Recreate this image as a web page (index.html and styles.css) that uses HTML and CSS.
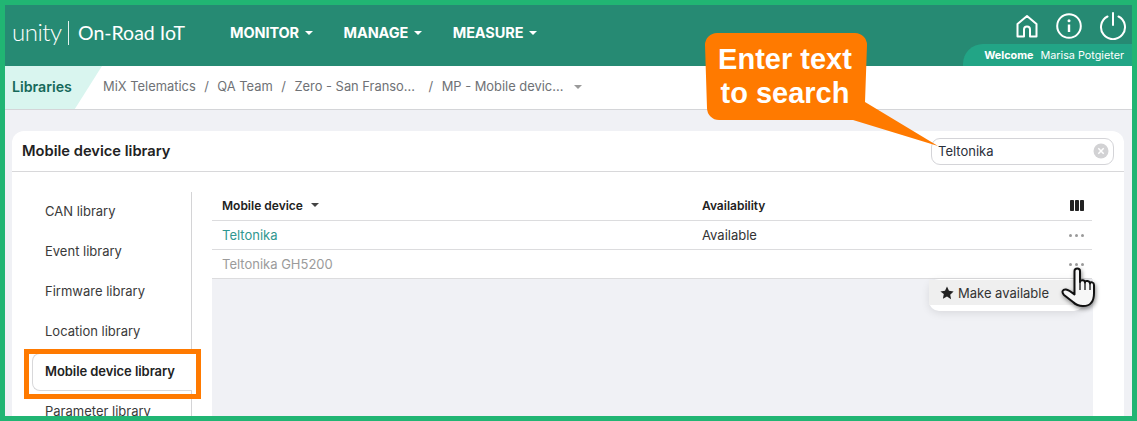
FILE: index.html
```html
<!DOCTYPE html>
<html lang="en">
<head>
<meta charset="utf-8">
<title>Mobile device library</title>
<link rel="stylesheet" href="styles.css">
</head>
<body>
<div class="frame">
  <header class="topbar">
    <div class="brand">
      <span class="brand-word">unity</span>
      <span class="brand-sep"></span>
      <span class="brand-app">On-Road IoT</span>
    </div>
    <nav class="mainnav">
      <span class="navitem">MONITOR<i class="caret caret-w"></i></span>
      <span class="navitem">MANAGE<i class="caret caret-w"></i></span>
      <span class="navitem">MEASURE<i class="caret caret-w"></i></span>
    </nav>
    <div class="userarea">
      <div class="icons">
        <svg width="24" height="24" viewBox="0 0 24 24" fill="none" stroke="#fff" stroke-width="2"><path d="M2.500 22.500V10L12 2l9.500 8v12.500h-6.500v-7a3 3 0 0 0-6 0v7z" stroke-linejoin="round"/></svg>
        <svg width="26" height="26" viewBox="0 0 26 26" fill="none" stroke="#fff" stroke-width="2"><circle cx="13" cy="13" r="11.800"/><path d="M13 11.500v7.500" stroke-width="2.400"/><circle cx="13" cy="7.800" r="1.500" fill="#fff" stroke="none"/></svg>
        <svg width="28" height="28" viewBox="0 0 28 28" fill="none" stroke="#fff" stroke-width="2" stroke-linecap="round"><path d="M8.500 4.500a12 12 0 1 0 11 0"/><path d="M14 1v12"/></svg>
      </div>
      <div class="welcome"><b>Welcome</b><span>Marisa Potgieter</span></div>
    </div>
  </header>
  <div class="crumbbar">
    <div class="crumbtab">Libraries</div>
    <div class="crumbs">
      <span>MiX Telematics</span><span class="sl">/</span>
      <span>QA Team</span><span class="sl">/</span>
      <span class="crumb-cut">Zero - San Franso...</span><span class="sl">/</span>
      <span>MP - Mobile devic...</span>
      <i class="caret caret-g"></i>
    </div>
  </div>
  <main class="content">
    <section class="card">
      <div class="cardhead">
        <h1>Mobile device library</h1>
        <div class="search">
          <span>Teltonika</span>
          <svg width="16" height="16" viewBox="0 0 16 16"><circle cx="8" cy="8" r="7.500" fill="#d2d2d4"/><path d="M5.300 5.300l5.400 5.400M10.700 5.300l-5.400 5.400" stroke="#fff" stroke-width="1.500"/></svg>
        </div>
      </div>
      <div class="cardbody">
        <aside class="side">
          <div class="sideitem">CAN library</div>
          <div class="sideitem">Event library</div>
          <div class="sideitem">Firmware library</div>
          <div class="sideitem">Location library</div>
          <div class="sideitem active">Mobile device library</div>
          <div class="sideitem">Parameter library</div>
        </aside>
        <div class="tablewrap">
          <div class="row headrow">
            <div class="c1">Mobile device<i class="caret caret-d"></i></div>
            <div class="c2">Availability</div>
            <div class="c3"><svg width="14" height="11" viewBox="0 0 14 11" fill="#222"><rect width="4" height="11" rx=".8"/><rect x="5" width="4" height="11" rx=".8"/><rect x="10" width="4" height="11" rx=".8"/></svg></div>
          </div>
          <div class="row">
            <div class="c1 link">Teltonika</div>
            <div class="c2">Available</div>
            <div class="c3"><span class="dots"><i></i><i></i><i></i></span></div>
          </div>
          <div class="row muted">
            <div class="c1">Teltonika GH5200</div>
            <div class="c2"></div>
            <div class="c3"><span class="dots"><i></i><i></i><i></i></span></div>
          </div>
          <div class="tablefill"></div>
        </div>
      </div>
    </section>
  </main>
</div>

<div class="menu">
  <div class="menuitem">
    <svg width="14" height="14" viewBox="0 0 24 24" fill="#222"><path d="M12 1l3.400 7.300 7.900 1-5.800 5.500 1.500 7.900L12 17.800l-7 3.900 1.500-7.900L.7 9.300l7.900-1z"/></svg>
    <span>Make available</span>
  </div>
</div>

<div class="hilite"></div>

<svg class="callout-tail" width="240" height="125" viewBox="0 0 240 125"><path d="M12 0H150a12 12 0 0 1 12 12L160 69 233 113 148 87H14a12 12 0 0 1-12-12L0 12A12 12 0 0 1 12 0z" fill="#ff7a00"/></svg>
<div class="callout">Enter text<br>to search</div>

<svg class="hand" width="40" height="48" viewBox="0 0 40 48"><path d="M14.500 6c0-3.500 5.500-3.500 5.500 0v11c0-2.500 5-2.500 5 .5 0-2.500 5-2 5 1 .5-2 4-1.500 4 1.500v8c0 5-1 8-3 10-1.500 2-4 3-8 3-5 0-8-2-10-4L4 30c-3-3-1-6 2-5.500 3 .5 6 3 8.500 5z" fill="#f7f7f7" stroke="#111" stroke-width="2" stroke-linejoin="round"/><path d="M20 17v8M25 18v7M30 19v6" stroke="#111" stroke-width="1.300" fill="none"/></svg>
</body>
</html>
```
FILE: styles.css
```css
* { box-sizing: border-box; }
html, body { margin: 0; padding: 0; }
body {
  position: relative;
  width: 1137px;
  height: 421px;
  overflow: hidden;
  font-family: Inter, "Liberation Sans", sans-serif;
  font-size: 13px;
  color: #333;
}
.frame {
  width: 1137px;
  height: 421px;
  border: 5px solid #21b573;
  overflow: hidden;
  display: flex;
  flex-direction: column;
  background: #f0f1f5;
}
.topbar {
  flex: 0 0 61px;
  background: #268a73;
  color: #fff;
  display: flex;
  padding-left: 7px;
}
.brand { display: flex; align-items: center; height: 55px; width: 218px; font-family: Lato, sans-serif; }
.brand-word { font-size: 24px; font-weight: 300; width: 56px; letter-spacing: -.5px; position: relative; top: -1px; }
.brand-sep { width: 1px; height: 24px; background: #e4f2ee; margin-right: 9px; }
.brand-app { font-size: 19.500px; font-weight: 400; white-space: nowrap; }
.mainnav { display: flex; gap: 30.500px; height: 55px; align-items: center; font-weight: 700; font-size: 14.500px; }
.navitem { display: flex; align-items: center; letter-spacing: -.1px; }
.caret { display: inline-block; width: 0; height: 0; border-left: 4px solid transparent; border-right: 4px solid transparent; border-top: 4px solid #fff; margin-left: 6px; }
.caret-g { border-top-color: #9a9a9a; margin-left: 11px; }
.caret-d { border-top-color: #444; margin-left: 8px; }
.userarea { margin-left: auto; width: 169px; display: flex; flex-direction: column; justify-content: space-between; }
.icons { display: flex; align-items: center; padding: 7px 0 0 52px; gap: 17px; }
.welcome {
  height: 22px;
  background: #22a586;
  border-top-left-radius: 20px;
  font-size: 10.800px;
  display: flex;
  align-items: center;
  justify-content: flex-end;
  gap: 7px;
  padding-right: 8px;
  white-space: nowrap;
}
.crumbbar {
  flex: 0 0 44px;
  background: #fff;
  border-bottom: 1px solid #d4d5d8;
  display: flex;
  align-items: center;
}
.crumbtab {
  width: 97px;
  height: 43px;
  background: #d9f5ef;
  clip-path: polygon(0 0, 100% 0, 72% 100%, 0 100%);
  color: #16695a;
  font-weight: 600;
  font-size: 14.200px;
  line-height: 41px;
  padding-left: 7px;
}
.crumbs { display: flex; align-items: center; color: #6f7276; font-size: 12.900px; padding: 0 0 2px 1px; white-space: nowrap; }
.sl { margin: 0 8.500px; }
.crumb-cut { margin-right: 5px; }
.content { flex: 1; min-height: 0; padding: 21px 8px 0 7px; }
.card { background: #fff; border-radius: 12px 12px 0 0; height: 400px; }
.cardhead {
  height: 41px;
  border-bottom: 1px solid #d8d8da;
  display: flex;
  align-items: center;
  justify-content: space-between;
  padding: 0 10px 0 10px;
}
h1 { margin: 0; font-size: 14.700px; font-weight: 600; color: #222; }
.search {
  width: 183px;
  height: 27px;
  border: 1px solid #d4d4d8;
  border-radius: 9px;
  display: flex;
  align-items: center;
  justify-content: space-between;
  padding: 0 4px 0 6px;
  color: #2a2f3a;
  font-size: 13px;
}
.cardbody { display: flex; padding-top: 20px; }
.side { width: 180px; border-right: 1px solid #d4d4d6; margin-right: 20px; padding-left: 20px; height: 240px; }
.sideitem { height: 40px; line-height: 38px; padding-left: 13px; color: #3a3a3a; font-size: 13px; white-space: nowrap; }
.active {
  height: 38px;
  line-height: 34px;
  margin: 1px -1px 1px 0;
  padding-left: 12px;
  font-weight: 600;
  letter-spacing: -.07px;
  color: #222;
  background: #fff;
  border: 1px solid #d8d8da;
  border-right: 0;
  border-radius: 8px 0 0 8px;
  position: relative;
}
.tablewrap { width: 881px; }
.row { display: flex; height: 29px; width: 880px; align-items: center; border-bottom: 1px solid #dcdcde; background: #fff; padding-left: 10px; color: #333; }
.headrow { font-weight: 600; font-size: 12px; color: #222; padding-bottom: 2px; }
.c1 { width: 480px; display: flex; align-items: center; }
.c2 { width: 360px; }
.c3 { width: 22px; display: flex; justify-content: flex-end; }
.link { color: #2f9790; }
.muted .c1 { color: #9b9b9b; }
.dots { display: flex; gap: 3px; }
.dots i { width: 3px; height: 3px; border-radius: 50%; background: #9a9a9a; }
.tablefill { height: 150px; background: #f0f1f5; }
.menu {
  position: absolute;
  left: 929px;
  top: 279px;
  width: 155px;
  height: 32px;
  background: #fff;
  border-radius: 10px;
  box-shadow: 0 2px 8px rgba(0,0,0,.1);
  padding-top: 1px;
}
.menuitem { height: 25px; background: #efefef; display: flex; align-items: center; gap: 4px; padding-left: 11px; color: #333; font-size: 13px; }
.hilite { position: absolute; left: 24px; top: 349px; width: 177px; height: 50px; border: 5px solid #ff7a00; }
.callout-tail { position: absolute; left: 705px; top: 33px; }
.callout {
  position: absolute;
  left: 704px;
  top: 42px;
  width: 162px;
  text-align: center;
  color: #fff;
  font-family: "Liberation Sans", Arial, sans-serif;
  font-weight: 700;
  font-size: 29px;
  line-height: 34px;
}
.hand { position: absolute; left: 1060px; top: 265px; filter: drop-shadow(1px 2px 2px rgba(0,0,0,.45)); }
```
